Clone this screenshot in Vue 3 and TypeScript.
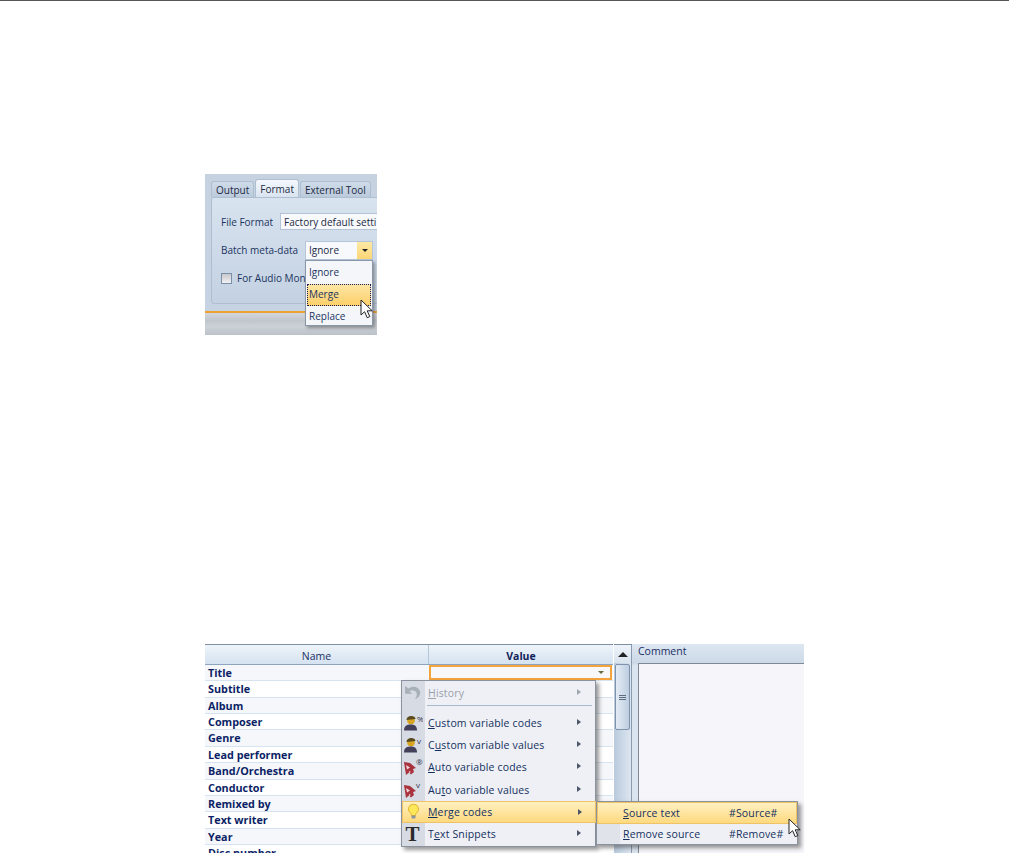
<script setup lang="ts">
const rows = ['Title','Subtitle','Album','Composer','Genre','Lead performer','Band/Orchestra','Conductor','Remixed by','Text writer','Year','Disc number']
interface Item { label: string; u: number; icon: string; active?: boolean }
const items: Item[] = [
  { label: 'Custom variable codes', u: 0, icon: 'p%' },
  { label: 'Custom variable values', u: 1, icon: 'pv' },
  { label: 'Auto variable codes', u: 0, icon: 'a@' },
  { label: 'Auto variable values', u: 2, icon: 'av' },
  { label: 'Merge codes', u: 0, icon: 'bulb', active: true },
  { label: 'Text Snippets', u: 1, icon: 'T' },
]
</script>

<template>
  <div class="page">
    <div class="topline"></div>

    <section class="shot-a">
      <div class="tabs">
        <span class="tab">Output</span>
        <span class="tab on">Format</span>
        <span class="tab">External Tool</span>
      </div>
      <div class="panel">
        <div class="line l1"><span class="lab">File Format</span><span class="field">Factory default setti</span></div>
        <div class="line l2"><span class="lab">Batch meta-data</span></div>
        <div class="line l3"><span class="check"></span><span class="lab">For Audio Mon</span><span class="lab tail">C</span></div>
      </div>
      <div class="foot"></div>
      <div class="combo"><span class="combo-txt">Ignore</span><span class="combo-btn"><i class="tri"></i></span></div>
      <div class="drop">
        <div class="opt">Ignore</div>
        <div class="opt sel">Merge</div>
        <div class="opt">Replace</div>
      </div>
      <svg class="cursor c1" width="16" height="22" viewBox="0 0 16 22"><path d="M1 1v15l3.600-3.300 2.600 6 2.600-1.100-2.600-5.800h5z" fill="#fff" stroke="#222" stroke-width="1"/></svg>
    </section>

    <section class="shot-b">
      <div class="grid">
        <div class="head">
          <div class="hc name">Name</div>
          <div class="hc val">Value</div>
        </div>
        <div class="body">
          <div v-for="(r, i) in rows" :key="r" class="row">
            <div class="cn">{{ r }}</div>
            <div class="cv" :class="{ edit: i === 0 }"><i v-if="i === 0" class="tri small"></i></div>
          </div>
        </div>
      </div>
      <div class="scroll">
        <div class="up"><i class="tri-up"></i></div>
        <div class="thumb"><i></i><i></i><i></i></div>
      </div>
      <div class="comment">
        <div class="ctitle">Comment</div>
        <div class="cbox"></div>
      </div>

      <div class="menu">
        <div class="mi hist">
          <span class="ic">
            <svg width="18" height="15" viewBox="0 0 20 17"><path d="M1 1v9h8L6 7c3-2 7-1 8 2 .8 2.500 0 5-2 7 4-1 7-5 6-9-1.500-5-8-7-13-3z" fill="#a9b0b8"/></svg>
          </span>
          <span class="txt dim"><u>H</u>istory</span><i class="arrow dimarrow"></i>
        </div>
        <div class="msep"><span></span></div>
        <div v-for="it in items" :key="it.label" class="mi" :class="{ act: it.active }">
          <span class="ic">
            <svg v-if="it.icon[0] === 'p'" width="20" height="16" viewBox="0 0 20 16"><circle cx="8" cy="5.500" r="3.800" fill="#d9a520"/><path d="M3.500 5c0-5 9-5 9-1l-4 .5z" fill="#5a4a20"/><path d="M1 15.500c0-5 3-6 7-6s6 2 6 6z" fill="#45405a"/><text x="14" y="7" class="ictxt">{{ it.icon[1] === '%' ? '%' : 'v' }}</text></svg>
            <svg v-else-if="it.icon[0] === 'a'" width="20" height="16" viewBox="0 0 20 16"><path d="M1 3l6 1 6 5-3 1 1 3-3 2.500-2-2-3 2.500z" fill="#a8323e"/><path d="M3 6l4 2.500-3 2zM6 12l2 1-2 1z" fill="#f2d5d8"/><text x="13" y="6" class="ictxt">{{ it.icon[1] === '@' ? '®' : 'v' }}</text></svg>
            <svg v-else-if="it.icon === 'bulb'" width="13" height="17" viewBox="0 0 16 20"><path d="M8 1a6 6 0 0 0-3.500 11c1 1 1 2 1 3h5c0-1 0-2 1-3A6 6 0 0 0 8 1z" fill="#ffe75a" stroke="#d8a520"/><rect x="5.500" y="15" width="5" height="3.500" rx="1" fill="#8a93a0"/></svg>
            <span v-else class="bigt">T</span>
          </span>
          <span class="txt">{{ it.label.slice(0, it.u) }}<u>{{ it.label[it.u] }}</u>{{ it.label.slice(it.u + 1) }}</span><i class="arrow"></i>
        </div>
      </div>
      <div class="sub">
        <div class="si act"><span class="stx"><u>S</u>ource text</span><span>#Source#</span></div>
        <div class="si"><span class="stx"><u>R</u>emove source</span><span>#Remove#</span></div>
      </div>
      <svg class="cursor c2" width="16" height="22" viewBox="0 0 16 22"><path d="M1 1v15l3.600-3.300 2.600 6 2.600-1.100-2.600-5.800h5z" fill="#fff" stroke="#222" stroke-width="1"/></svg>
    </section>
  </div>
</template>

<style>
html, body { margin: 0; background: #fff; overflow: hidden; }
</style>

<style scoped>
.page { width: 1009px; height: 853px; overflow: hidden; position: relative; font-family: "Open Sans", "Noto Sans", sans-serif; font-size: 10.500px; color: #15315f; }
.topline { height: 1px; background: #555; }

.shot-a { position: relative; width: 172px; height: 161px; margin: 173px 0 0 205px; font-size: 10px; background: linear-gradient(#c6d2e0, #c6d3e2 136px, #c9d2dc 137px); overflow: hidden; }
.tabs { display: flex; gap: 1px; padding: 5px 0 0 6px; height: 19px; box-sizing: content-box; }
.tab { padding: 2px 4px 0; height: 16px; margin-top: 2px; background: linear-gradient(#cfdbe8, #bccbdc); border: 1px solid #aebfd2; border-bottom: 0; border-radius: 3px 3px 0 0; color: #1c2a44; white-space: nowrap; line-height: 13px; box-sizing: border-box; }
.tab.on { background: linear-gradient(#f4f8fc, #d8e3ef); margin-top: 0; padding-top: 3px; height: 19px; }
.panel { position: absolute; left: 6px; top: 23px; width: 180px; height: 107px; background: linear-gradient(#d8e3ef, #c3d1e2); border: 1px solid #aebfd2; border-radius: 3px; box-sizing: border-box; }
.line { position: absolute; left: 9px; display: flex; align-items: center; white-space: nowrap; color: #1c3560; }
.l1 { top: 15px; gap: 7px; }
.l2 { top: 45px; }
.l3 { top: 73px; gap: 5px; }
.field { background: #f7f9fc; border: 1px solid #b4c4d6; padding: 1px 3px; height: 17px; line-height: 14px; box-sizing: border-box; width: 120px; color: #1c2a44; }
.check { width: 11px; height: 11px; box-sizing: border-box; background: linear-gradient(#c8c8cc, #f2f2f4); border: 1px solid #7c8fa8; }
.tail { margin-left: 66px; }
.combo { position: absolute; left: 100px; top: 67px; width: 68px; height: 19px; box-sizing: border-box; background: #f7f9fc; border: 1px solid #b6c6d8; display: flex; align-items: center; justify-content: space-between; padding-left: 3px; color: #1c2a44; }
.combo-txt { padding-bottom: 2px; }
.combo-btn { width: 15px; height: 17px; background: linear-gradient(#fde9a4, #fdd676); display: flex; align-items: center; justify-content: center; }
.tri { display: block; width: 0; height: 0; border: 3px solid transparent; border-top: 3px solid #222; border-bottom: 0; }
.tri.small { border-top-color: #6b6b40; margin-left: auto; margin-right: 6px; }
.drop { position: absolute; left: 100px; top: 86px; width: 68px; height: 66px; background: #f4f6fa; border: 1px solid #8a97a8; box-sizing: border-box; box-shadow: 2px 2px 3px rgba(60,60,60,.45); padding: 1px; color: #1c3560; }
.opt { height: 22px; line-height: 21px; padding-left: 2px; box-sizing: border-box; }
.sel { background: linear-gradient(#fde7a6, #fdcf68); outline: 1px dotted #1a1a50; outline-offset: -1px; }
.cursor { position: absolute; }
.c1 { left: 155px; top: 125px; }
.foot { position: absolute; left: 0; right: 0; top: 137px; height: 24px; border-top: 2px solid #f0a030; background: linear-gradient(#d3d7dc, #c0c6cc 35%, #ccd1d6 60%, #bcc2c9); box-sizing: border-box; }

.shot-b { position: absolute; left: 205px; top: 644px; width: 599px; height: 220px; display: flex; }
.grid { width: 408px; flex: none; background: #fff; border-top: 1px solid #7f8ea3; box-sizing: border-box; }
.head { display: flex; height: 19px; background: linear-gradient(#eef4fb, #d5e2f0); border-bottom: 1px solid #8ea3bd; box-sizing: content-box; }
.hc { text-align: center; line-height: 22px; color: #1b2f63; }
.name { width: 224px; border-right: 1px solid #b5c6da; box-sizing: border-box; }
.val { flex: 1; font-weight: 700; color: #12245a; }
.row { display: flex; height: 16.360px; box-sizing: border-box; border-bottom: 1px solid #d6e3f1; background: #fff; }
.row:nth-child(odd) { background: #f5f7fb; }
.cn { width: 224px; padding: 0 0 0 3px; box-sizing: border-box; font-size: 10.800px; font-weight: 700; color: #0c1f66; line-height: 15px; white-space: nowrap; }
.cv { flex: 1; }
.cv.edit { border: 2px solid #f5a43c; height: 15px; margin-right: 1px; display: flex; align-items: center; box-sizing: border-box; background: #f8f8fa; }
.scroll { width: 18px; margin-left: 1px; flex: none; background: linear-gradient(90deg, #b9cadd, #dce6f0); border-top: 1px solid #7f8ea3; border-right: 1px solid #8a9bb0; box-sizing: border-box; }
.up { height: 18px; display: flex; align-items: center; justify-content: center; background: linear-gradient(#eef3f9, #d9e3ee); }
.tri-up { width: 0; height: 0; border: 5px solid transparent; border-bottom: 5px solid #222; border-top: 0; }
.thumb { margin: 1px 1px 0; height: 66px; background: linear-gradient(90deg, #e4ecf5, #bdcde0); border: 1px solid #7f93ad; border-radius: 2px; display: flex; flex-direction: column; align-items: center; justify-content: center; gap: 1px; box-sizing: border-box; }
.thumb i { display: block; width: 7px; height: 1px; background: #5d6c80; }
.comment { flex: none; width: 172px; background: linear-gradient(#dde7f2, #cbd8e6 20px, #dbe5f0 21px); }
.ctitle { height: 19px; line-height: 14px; padding-left: 6px; color: #1b2f63; }
.cbox { margin-left: 6px; height: 200px; background: #f6f6fa; border: 1px solid #7f8894; border-right: 0; box-sizing: border-box; }

.menu { position: absolute; left: 196px; top: 36px; width: 195px; height: 167px; box-sizing: border-box; background: linear-gradient(90deg, #d6dbe4 23px, #eef0f5 23px); border: 1px solid #8a929e; box-shadow: 3px 3px 4px rgba(50,50,50,.5); padding-top: 1px; color: #15315f; }
.mi { display: flex; align-items: center; height: 22.200px; box-sizing: border-box; position: relative; }
.mi.act { background: linear-gradient(#fff0c0, #fed97f); border: 1px solid #eec368; margin: 0 -1px 0 0; }
.hist { height: 23px; padding-bottom: 2px; }
.ic { width: 21px; display: flex; align-items: center; justify-content: center; flex: none; }
.txt { padding-left: 5px; white-space: nowrap; letter-spacing: .15px; }
.act .txt { padding-left: 4px; }
.dim { color: #9aa1ab; }
.msep { height: 4px; position: relative; margin-bottom: 3px; }
.msep span { position: absolute; left: 25px; right: 3px; top: 0; height: 1px; background: #a9b8cb; }
.arrow { position: absolute; left: 175px; top: 7px; width: 0; height: 0; border: 3px solid transparent; border-left: 4px solid #4c5668; border-right: 0; }
.dimarrow { border-left-color: #a0a6ae; }
.ictxt { font-size: 8px; fill: #30324a; font-family: "Open Sans", sans-serif; }
.bigt { font-family: "Liberation Serif", serif; font-weight: 700; font-size: 21px; color: #2a2a2a; line-height: 20px; }
.sub { position: absolute; left: 391px; top: 157px; width: 202px; height: 44px; box-sizing: border-box; background: linear-gradient(90deg, #e0e3ea 23px, #eef0f5 23px); border: 1px solid #8a929e; box-shadow: 3px 3px 4px rgba(50,50,50,.5); color: #15315f; }
.si { height: 20px; display: flex; align-items: center; padding-left: 26px; box-sizing: border-box; white-space: nowrap; letter-spacing: .15px; }
.si.act { background: linear-gradient(#fff0c0, #fed97f); border: 1px solid #eec368; height: 22px; padding-left: 25px; }
.stx { width: 106px; flex: none; }
.c2 { left: 583px; top: 174px; }
</style>
